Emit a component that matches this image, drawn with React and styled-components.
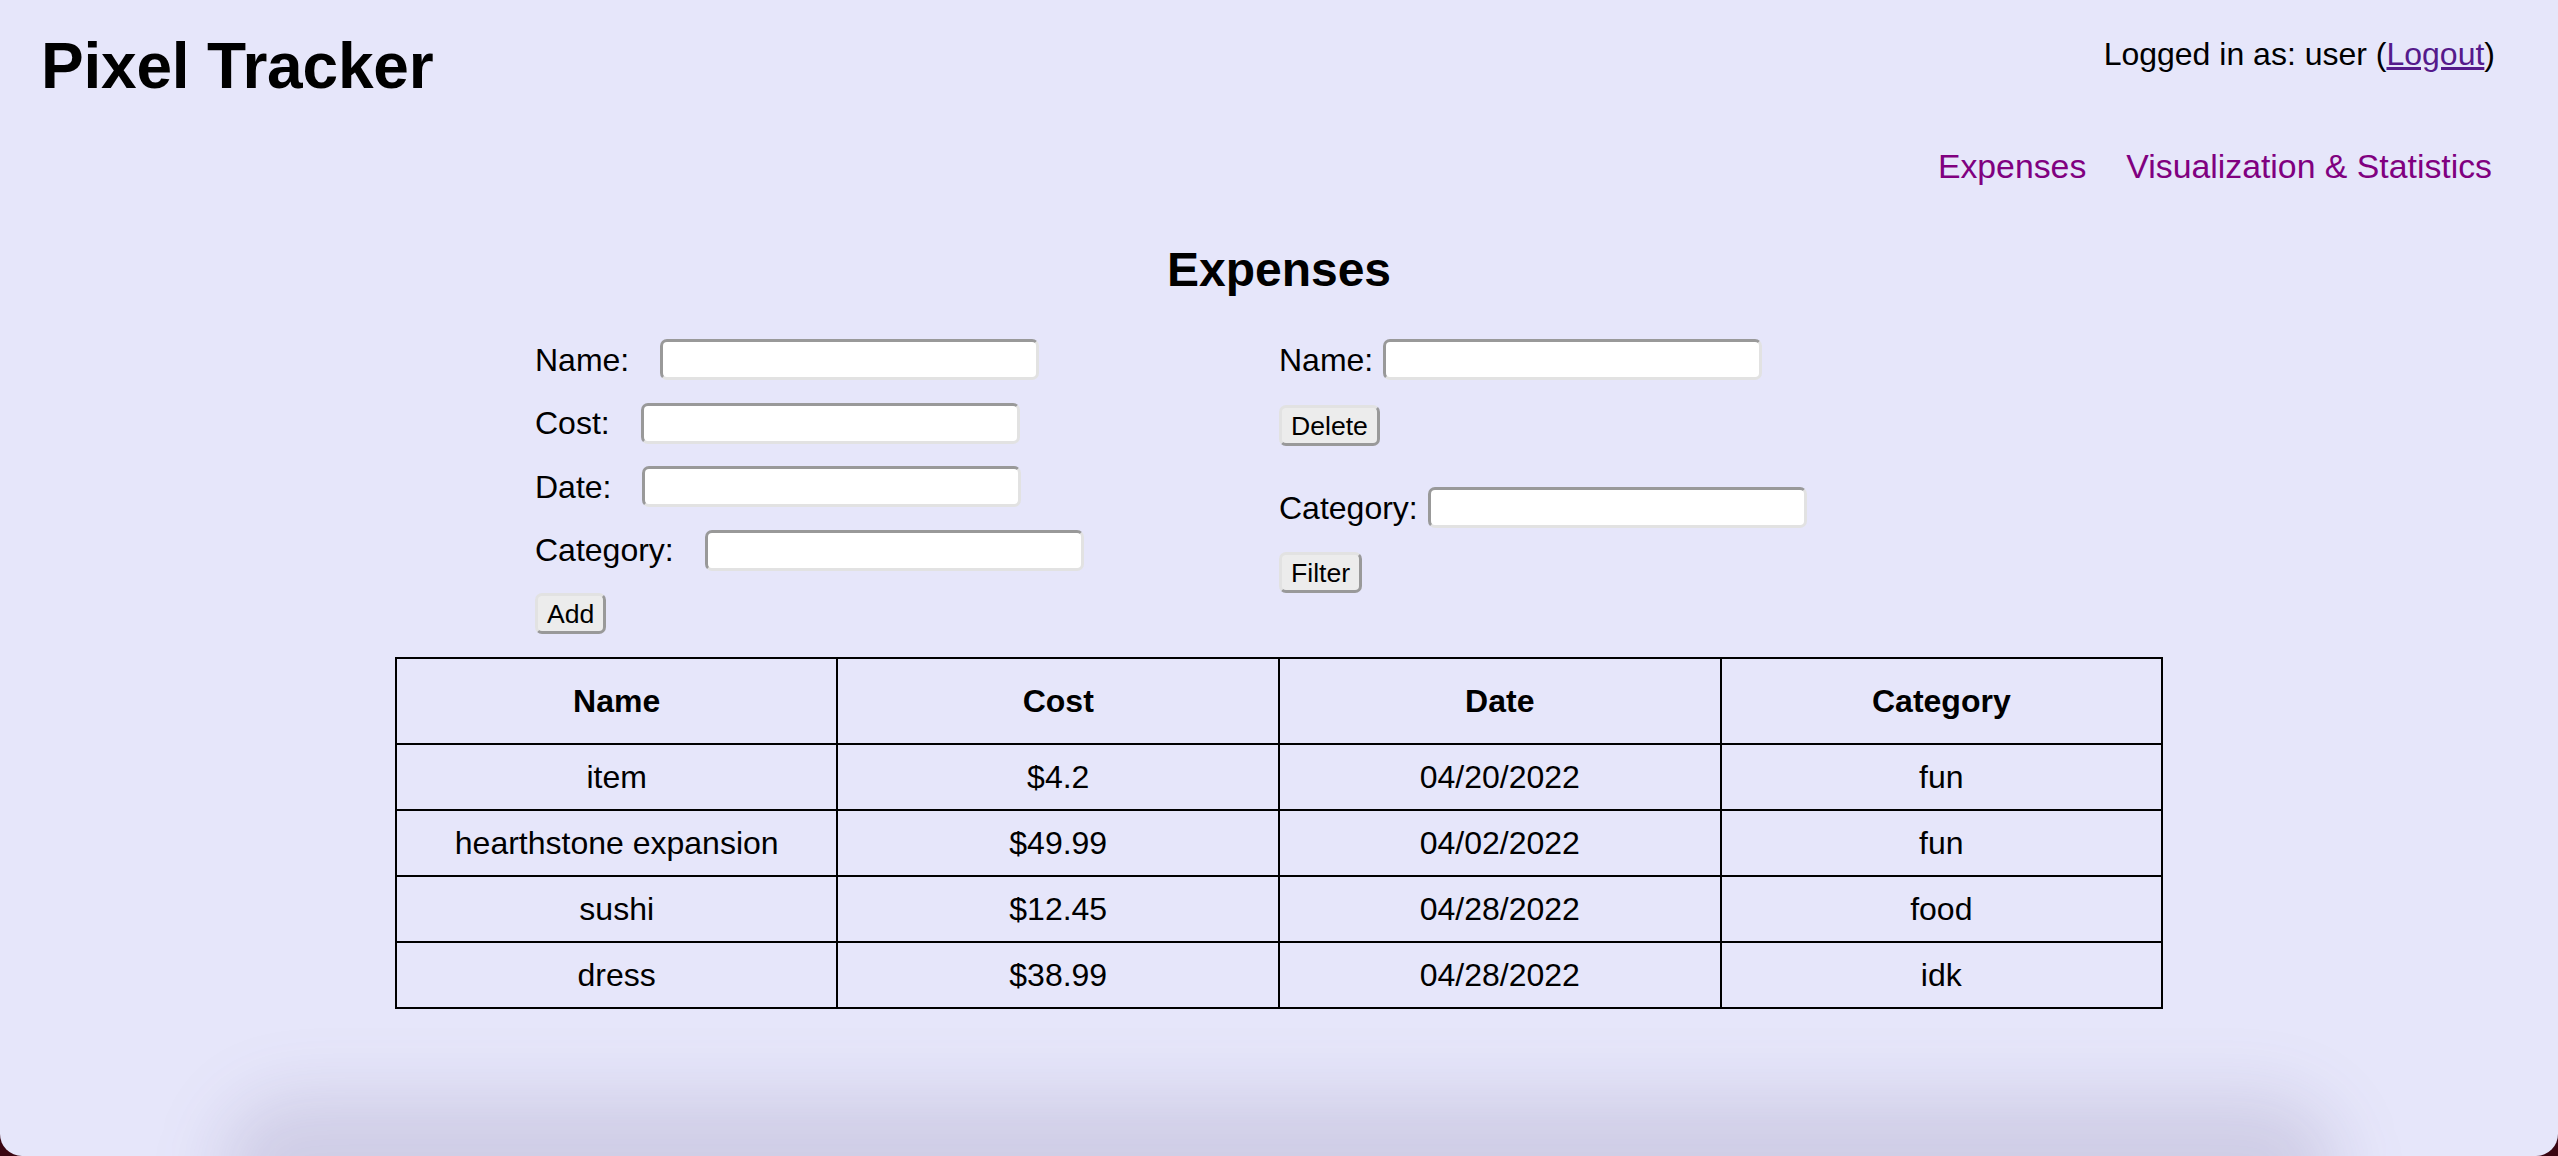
import React from 'react';
import styled, { createGlobalStyle } from 'styled-components';

const GlobalStyle = createGlobalStyle`
    html, body {
        margin: 0;
        padding: 0;
        background: #3a0612;
    }
    body {
        font-family: "Liberation Sans", Arial, Helvetica, sans-serif;
        color: #000;
    }
`;

const expenses = [
    { name: 'item', cost: '$4.2', date: '04/20/2022', category: 'fun' },
    { name: 'hearthstone expansion', cost: '$49.99', date: '04/02/2022', category: 'fun' },
    { name: 'sushi', cost: '$12.45', date: '04/28/2022', category: 'food' },
    { name: 'dress', cost: '$38.99', date: '04/28/2022', category: 'idk' },
];

export default function App() {
    return (
        <>
            <GlobalStyle />
            <Window>
                <HeaderStyled>
                    <h1>Pixel Tracker</h1>
                    <UserArea>
                        <p>Logged in as: user (<a href="#logout">Logout</a>)</p>
                        <NavStyled>
                            <a href="#expenses">Expenses</a>
                            <a href="#stats">Visualization &amp; Statistics</a>
                        </NavStyled>
                    </UserArea>
                </HeaderStyled>

                <Heading>Expenses</Heading>

                <Forms>
                    <FormColumn $left>
                        <Row $gap={31}><label>Name:</label><Input type="text" /></Row>
                        <Row $gap={31}><label>Cost:</label><Input type="text" /></Row>
                        <Row $gap={31}><label>Date:</label><Input type="text" /></Row>
                        <Row $gap={31}><label>Category:</label><Input type="text" /></Row>
                        <Row><Button>Add</Button></Row>
                    </FormColumn>
                    <FormColumn>
                        <Row $gap={10}><label>Name:</label><Input type="text" /></Row>
                        <Row $space={25}><Button>Delete</Button></Row>
                        <Row $gap={10} $space={41}><label>Category:</label><Input type="text" /></Row>
                        <Row $space={24}><Button>Filter</Button></Row>
                    </FormColumn>
                </Forms>

                <TableStyled>
                    <thead>
                        <tr>
                            <th>Name</th>
                            <th>Cost</th>
                            <th>Date</th>
                            <th>Category</th>
                        </tr>
                    </thead>
                    <tbody>
                        {expenses.map((e, i) => (
                            <tr key={i}>
                                <td>{e.name}</td>
                                <td>{e.cost}</td>
                                <td>{e.date}</td>
                                <td>{e.category}</td>
                            </tr>
                        ))}
                    </tbody>
                </TableStyled>

                <DockShadow />
            </Window>
        </>
    );
}

const Window = styled.div`
    position: relative;
    overflow: hidden;
    box-sizing: border-box;
    height: 1156px;
    padding: 0 16px;
    background-color: #e6e6fa;
    border-radius: 0 0 22px 22px;
`;

const HeaderStyled = styled.div`
    display: flex;
    justify-content: space-between;
    align-items: flex-start;
    padding: 30px 47px 0 25px;
    h1 {
        margin: 0;
        font-size: 64px;
        line-height: 72px;
        font-weight: bold;
        letter-spacing: -0.2px;
    }
`;

const UserArea = styled.div`
    display: flex;
    flex-direction: column;
    align-items: flex-end;
    padding-top: 6px;
    p {
        margin: 0;
        font-size: 32px;
        line-height: 36px;
    }
    p a {
        color: #551a8b;
        text-decoration: underline;
    }
`;

const NavStyled = styled.nav`
    display: flex;
    gap: 40px;
    margin-top: 75px;
    margin-right: 3px;
    a {
        color: #800080;
        text-decoration: none;
        font-size: 33.8px;
        line-height: 38px;
    }
`;

const Heading = styled.h2`
    margin: 58px 0 0;
    text-align: center;
    font-size: 48px;
    line-height: 54px;
    font-weight: bold;
`;

const Forms = styled.div`
    display: grid;
    grid-template-columns: 1fr 1fr;
    margin-top: 42px;
`;

const FormColumn = styled.div`
    display: flex;
    flex-direction: column;
    padding-left: ${p => (p.$left ? '519px' : '0')};
    & > div + div {
        margin-top: 22.6px;
    }
`;

const Row = styled.div`
    display: flex;
    align-items: center;
    height: 41px;
    gap: ${p => p.$gap || 0}px;
    && {
        margin-top: ${p => (p.$space ? `${p.$space}px` : undefined)};
    }
    label {
        font-size: 32px;
        line-height: 36px;
    }
`;

const Input = styled.input`
    box-sizing: border-box;
    width: 379px;
    height: 41px;
    padding: 2px 6px;
    background: #fff;
    border: 3px solid;
    border-color: #999 #e2e2e2 #e2e2e2 #999;
    border-radius: 7px;
    font-size: 26px;
    outline: none;
`;

const Button = styled.button`
    box-sizing: border-box;
    height: 41px;
    padding: 0 9px;
    background: #ececec;
    border: 3px solid;
    border-color: #e2e2e2 #999 #999 #e2e2e2;
    border-radius: 7px;
    font-family: "Liberation Sans", Arial, sans-serif;
    font-size: 26.6px;
    line-height: 30px;
    color: #000;
`;

const TableStyled = styled.table`
    width: 70%;
    margin: 23px auto 0;
    border-collapse: collapse;
    border: 2px solid #000;
    table-layout: fixed;
    font-size: 32px;
    th, td {
        border: 2px solid #000;
        text-align: center;
        line-height: 36px;
    }
    th {
        padding: 24px 8px;
        font-weight: bold;
    }
    td {
        padding: 14px 8px;
    }
`;

const DockShadow = styled.div`
    position: absolute;
    left: 220px;
    right: 220px;
    bottom: -90px;
    height: 150px;
    background: rgba(70, 60, 110, 0.14);
    border-radius: 75px;
    filter: blur(34px);
    pointer-events: none;
`;
